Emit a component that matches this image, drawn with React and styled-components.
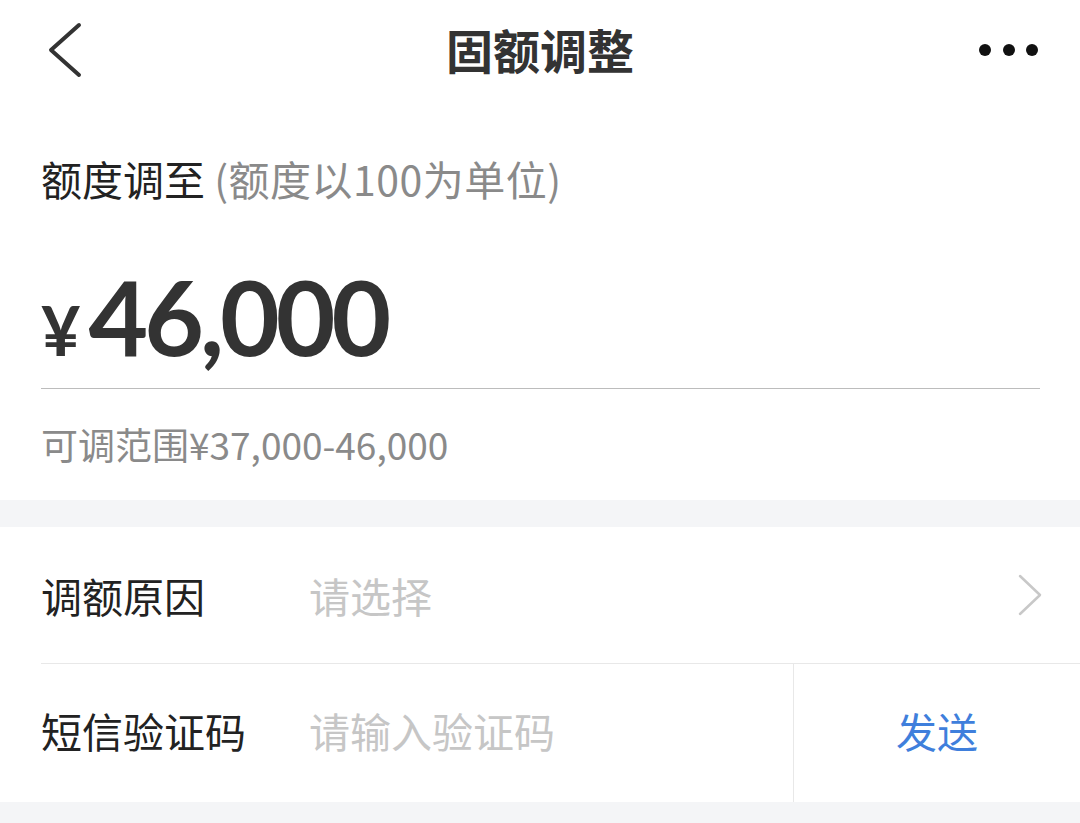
import React from "react";
import styled, { createGlobalStyle } from "styled-components";

const Global = createGlobalStyle`
  html, body { margin: 0; padding: 0; background: #ffffff; }
  body { font-family: "Noto Sans CJK SC", "Noto Sans", sans-serif; }
  * { box-sizing: border-box; }
`;

const Page = styled.div`
  width: 1080px;
  min-height: 823px;
  background: #f4f5f7;
  display: flex;
  flex-direction: column;
`;

const Header = styled.header`
  height: 100px;
  background: #fff;
  display: grid;
  grid-template-columns: 1fr auto 1fr;
  align-items: center;
`;

const BackButton = styled.div`
  justify-self: start;
  margin-left: 46px;
  display: flex;
`;

const Title = styled.h1`
  margin: 0 0 4px 0;
  font-size: 47px;
  font-weight: 700;
  color: #333;
  line-height: 1;
`;

const MoreButton = styled.div`
  justify-self: end;
  margin-right: 41px;
  display: flex;
`;

const AmountSection = styled.section`
  background: #fff;
  padding: 50px 40px 31px 41px;
  display: flex;
  flex-direction: column;
`;

const LabelLine = styled.div`
  font-size: 41px;
  line-height: 56px;
  height: 56px;
  color: #222;
  white-space: nowrap;
`;

const Hint = styled.span`
  color: #8a8a8a;
  letter-spacing: 0.5px;
`;

const AmountRow = styled.div`
  margin-top: 59px;
  display: flex;
  align-items: baseline;
  font-family: Lato, "Noto Sans", sans-serif;
  font-weight: 700;
  color: #333;
  height: 104px;
  line-height: 1;
`;

const Currency = styled.span`
  font-size: 68px;
  margin-right: 8px;
`;

const Amount = styled.span`
  font-size: 103px;
  letter-spacing: -4px;
`;

const Divider = styled.div`
  margin-top: 19px;
  height: 1px;
  background: #bcbcbc;
`;

const RangeText = styled.div`
  margin-top: 30px;
  font-size: 37px;
  line-height: 50px;
  color: #8a8a8a;
`;

const Gap = styled.div`
  height: 27px;
`;

const FormGroup = styled.section`
  background: #fff;
  padding-left: 41px;
`;

const Row = styled.div`
  display: flex;
  align-items: stretch;
  height: ${(p) => p.$h}px;
  border-bottom: ${(p) => (p.$divider ? "1px solid #e8e8e8" : "none")};
`;

const Field = styled.div`
  flex: 1;
  display: flex;
  align-items: center;
  padding-right: ${(p) => p.$pr || 0}px;
  padding-bottom: ${(p) => p.$pb || 0}px;
`;

const RowLabel = styled.div`
  width: 268px;
  font-size: 41px;
  color: #222;
  white-space: nowrap;
`;

const Placeholder = styled.div`
  flex: 1;
  font-size: 41px;
  color: #c6c6c6;
  white-space: nowrap;
`;

const SendButton = styled.div`
  width: 287px;
  border-left: 1px solid #e8e8e8;
  display: flex;
  align-items: center;
  justify-content: center;
  padding-bottom: 6px;
  font-size: 41px;
  color: #3f7fdc;
`;

export default function App() {
  return (
    <>
      <Global />
      <Page>
        <Header>
          <BackButton>
            <svg width="40" height="56" viewBox="46 21 40 56">
              <polyline
                points="79,24 51,49 79,74"
                fill="none"
                stroke="#333"
                strokeWidth="4"
                strokeLinecap="round"
                strokeLinejoin="round"
              />
            </svg>
          </BackButton>
          <Title>固额调整</Title>
          <MoreButton>
            <svg width="60" height="14" viewBox="0 0 60 14">
              <circle cx="6" cy="7" r="6" fill="#111" />
              <circle cx="30" cy="7" r="6" fill="#111" />
              <circle cx="53" cy="7" r="6" fill="#111" />
            </svg>
          </MoreButton>
        </Header>

        <AmountSection>
          <LabelLine>
            额度调至 <Hint>(额度以100为单位)</Hint>
          </LabelLine>
          <AmountRow>
            <Currency>¥</Currency>
            <Amount>46,000</Amount>
          </AmountRow>
          <Divider />
          <RangeText>可调范围¥37,000-46,000</RangeText>
        </AmountSection>

        <Gap />

        <FormGroup>
          <Row $h={137} $divider>
            <Field $pr={38}>
              <RowLabel>调额原因</RowLabel>
              <Placeholder>请选择</Placeholder>
              <svg width="24" height="42" viewBox="0 0 24 42">
                <polyline
                  points="2,2 22,21 2,40"
                  fill="none"
                  stroke="#c8c8c8"
                  strokeWidth="2.5"
                  strokeLinecap="round"
                  strokeLinejoin="round"
                />
              </svg>
            </Field>
          </Row>
          <Row $h={138}>
            <Field $pb={6}>
              <RowLabel>短信验证码</RowLabel>
              <Placeholder>请输入验证码</Placeholder>
            </Field>
            <SendButton>发送</SendButton>
          </Row>
        </FormGroup>
      </Page>
    </>
  );
}
